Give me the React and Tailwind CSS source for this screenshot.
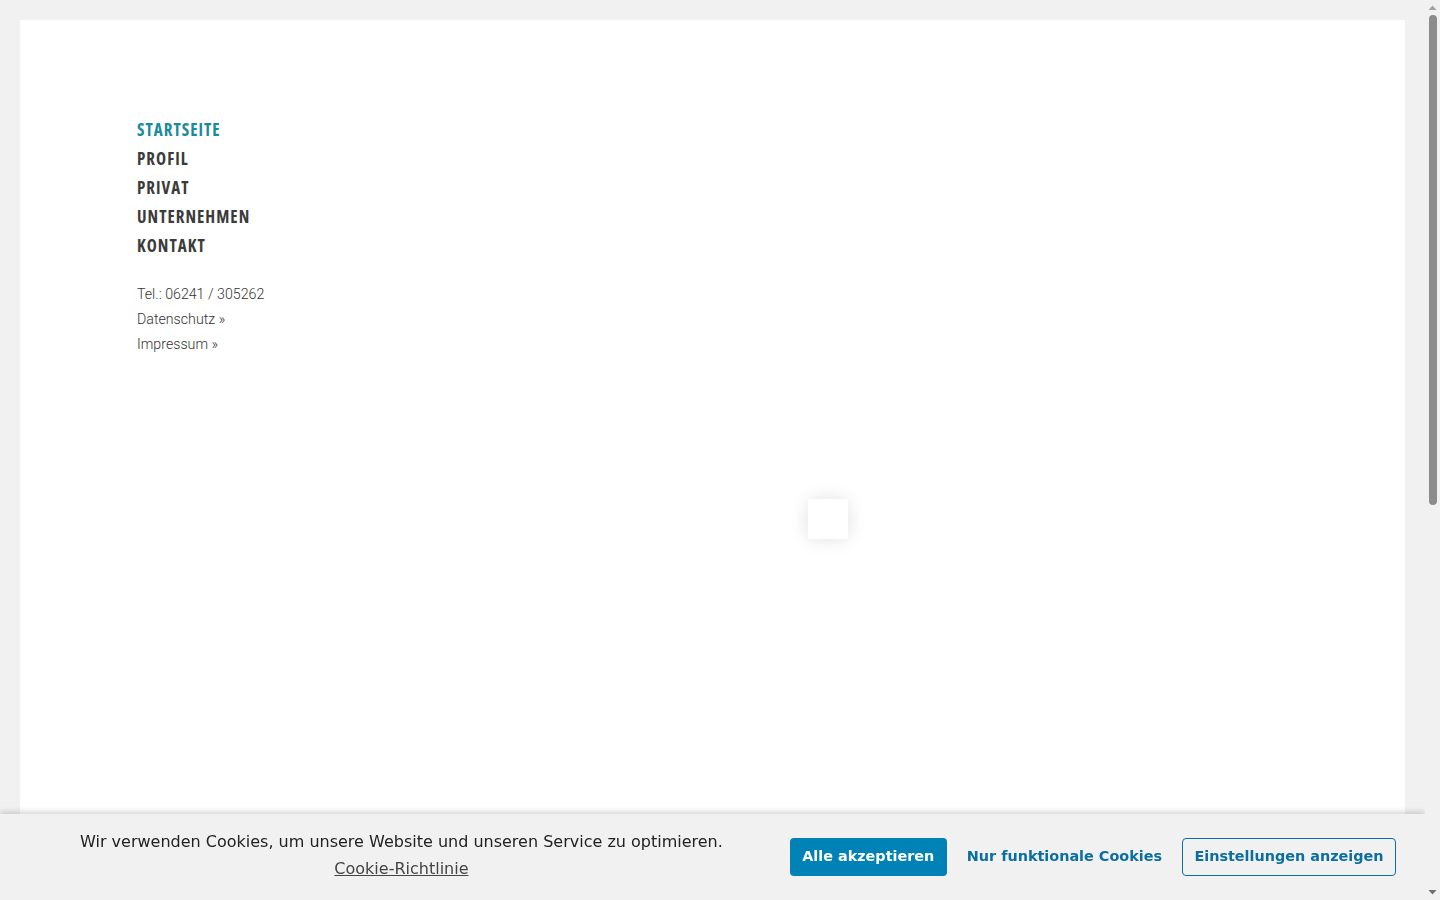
import React from "react";

const navItems = [
  { label: "STARTSEITE", active: true },
  { label: "PROFIL" },
  { label: "PRIVAT" },
  { label: "UNTERNEHMEN" },
  { label: "KONTAKT" },
];

export default function App() {
  return (
    <div className="min-h-screen bg-[#f1f1f1] py-[20px] pl-[20px] pr-[35px]">
      <div className="relative h-[1560px] bg-white pl-[117px] pt-[95px]">
        <nav className="flex flex-col">
          {navItems.map((item) => (
            <a
              key={item.label}
              href="#"
              className={`h-[29px] text-[17px] leading-[29px] font-bold tracking-[0.06em] [font-family:'Open_Sans',sans-serif] [font-stretch:75%] ${
                item.active ? "text-[#1a8a9e]" : "text-[#3b3b3b]"
              }`}
            >
              {item.label}
            </a>
          ))}
        </nav>
        <div className="mt-[22px] flex flex-col text-[14.2px] leading-[25px] font-light text-[#333] [font-family:Roboto,sans-serif]">
          <span>Tel.: 06241 / 305262</span>
          <a href="#">Datenschutz »</a>
          <a href="#">Impressum »</a>
        </div>

        {/* loading spinner placeholder */}
        <div className="absolute left-[788px] top-[479px] h-[40px] w-[40px] bg-white shadow-[0_0_18px_rgba(0,0,0,0.12)]" />
      </div>

      {/* cookie consent bar */}
      <div className="fixed bottom-0 left-0 right-[15px] flex h-[86px] items-center justify-between bg-[#f1f1f1] pl-[80px] pr-[29px] shadow-[0_-2px_6px_rgba(0,0,0,0.18)] [font-family:'DejaVu_Sans',sans-serif]">
        <div className="mb-[3px] flex flex-col items-center whitespace-nowrap text-[16px] text-[#222]">
          <p className="leading-[24px]">
            Wir verwenden Cookies, um unsere Website und unseren Service zu optimieren.
          </p>
          <a href="#" className="mt-[3px] leading-[24px] text-[#444] underline">
            Cookie-Richtlinie
          </a>
        </div>
        <div className="flex items-center gap-[20px] text-[14.4px] font-bold">
          <button className="h-[38px] w-[157px] rounded-[4px] bg-[#0082b6] text-white">
            Alle akzeptieren
          </button>
          <button className="h-[38px] text-[#0a6fa0]">Nur funktionale Cookies</button>
          <button className="h-[38px] w-[214px] rounded-[4px] border border-[#0a6fa0] bg-transparent text-[#0a6fa0]">
            Einstellungen anzeigen
          </button>
        </div>
      </div>

      {/* window scrollbar */}
      <div className="fixed bottom-0 right-0 top-0 flex w-[15px] flex-col items-center bg-[#f1f1f1]">
        <svg width="15" height="15" viewBox="0 0 15 15" className="shrink-0">
          <path d="M3.5 10 L7.5 5.5 L11.5 10 Z" fill="#a3a3a3" />
        </svg>
        <div className="h-[490px] w-[8px] shrink-0 rounded-[4px] bg-[#8c8c8c]" />
        <div className="flex-1" />
        <svg width="15" height="15" viewBox="0 0 15 15" className="shrink-0">
          <path d="M3.5 5 L7.5 9.5 L11.5 5 Z" fill="#6f6f6f" />
        </svg>
      </div>
    </div>
  );
}
